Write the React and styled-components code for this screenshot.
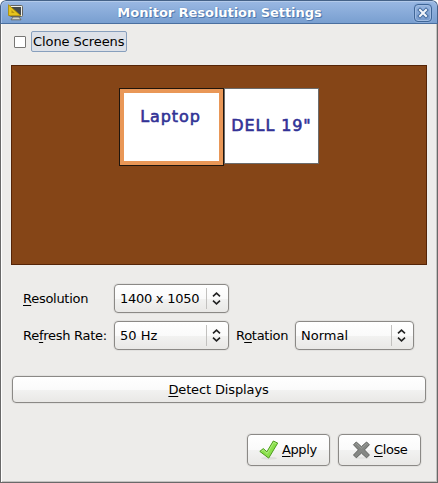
import React from "react";
import styled, { createGlobalStyle } from "styled-components";

const GlobalStyle = createGlobalStyle`
  * { box-sizing: border-box; }
  body { margin: 0; background: #fff; }
`;

const Window = styled.div`
  display: flex;
  flex-direction: column;
  width: 438px;
  height: 483px;
  overflow: hidden;
  border-radius: 6px 6px 0 0;
  background: #edecea;
  color: #000;
  font: 13px/16px "DejaVu Sans", sans-serif;
`;

const TitleBar = styled.header`
  display: flex;
  align-items: center;
  height: 24px;
  flex: none;
  padding: 1px 5px 0 6px;
  border: 1px solid #456288;
  border-bottom-color: #4a6f9f;
  border-radius: 6px 6px 0 0;
  background: linear-gradient(#9ab8e3, #799fd0);
  box-shadow: inset 0 1px #b3caea, inset 1px 0 #a3bee5;
`;

const Title = styled.h1`
  flex: 1;
  margin: 0;
  padding-left: 1px;
  color: #fff;
  font-size: 13px;
  line-height: 20px;
  text-align: center;
  white-space: nowrap;
  letter-spacing: -0.05px;
  text-shadow: 1px 1px #5078ad, 0 0 1px #4a70a5;
`;

const CloseBox = styled.button`
  display: flex;
  align-items: center;
  justify-content: center;
  width: 18px;
  height: 18px;
  padding: 0;
  border: 1px solid #3f6697;
  border-radius: 4px;
  background: linear-gradient(#96b5e0, #7599cb);
  box-shadow: 0 0 0 1px #8caddb, inset 0 0 0 1px #a1bce2;
`;

const Body = styled.main`
  flex: 1;
  display: flex;
  flex-direction: column;
  padding: 7px 10px 15px 10px;
  border: 1px solid #696969;
  border-top: 0;
  box-shadow: inset 1px 0 #fff, inset -1px -1px #c3c2c0;
`;

const CheckRow = styled.label`
  display: flex;
  align-items: center;
  gap: 5px;
  height: 21px;
  margin-left: 3px;
`;

const CheckBox = styled.span`
  width: 12px;
  height: 12px;
  border: 1px solid #777674;
  border-radius: 1px;
  background: #fff;
`;

const CheckText = styled.span`
  width: 96px;
  height: 21px;
  padding: 2px 0 0 1px;
  border: 1px solid #879fbd;
  border-radius: 2px;
  background: #dde1e8;
  white-space: nowrap;
  letter-spacing: -0.08px;
`;

const Canvas = styled.section`
  display: flex;
  align-items: flex-start;
  height: 200px;
  flex: none;
  margin: 13px 0 19px;
  padding: 22px 0 0 107px;
  border: 1px solid #552407;
  background: #854517;
`;

const Screen = styled.div`
  display: flex;
  justify-content: center;
  width: ${(p) => p.$width}px;
  height: ${(p) => p.$height}px;
  padding: ${(p) => p.$top}px ${(p) => p.$right || 0}px 0 0;
  border: 1px solid ${(p) => (p.$selected ? "#20150c" : "#6c6c6c")};
  background: #fff;
  box-shadow: ${(p) => (p.$selected ? "inset 0 0 0 4px #e99757" : "none")};
  color: #323296;
  font-size: 16px;
  line-height: 20px;
  letter-spacing: 0.9px;
  -webkit-text-stroke: 0.6px #323296;
  white-space: nowrap;
`;

const Field = styled.div`
  display: flex;
  align-items: center;
  height: 29px;
  margin-bottom: 8px;
  padding-left: 12px;
`;

const Label = styled.span`
  width: ${(p) => p.$width}px;
  margin-left: ${(p) => p.$gap || 0}px;
  white-space: nowrap;
  letter-spacing: -0.28px;
`;

const Key = styled.u`
  text-decoration-thickness: 1px;
  text-underline-offset: 2px;
  text-decoration-skip-ink: none;
`;

const Control = styled.button`
  display: flex;
  align-items: center;
  flex: none;
  padding: 0;
  border: 1px solid #8b8986;
  border-radius: 4px;
  background: linear-gradient(#fff, #fafafa 50%, #f2f2f1 51%, #e9e8e6);
  box-shadow: 0 0 0 1px #e2e1df;
  color: #000;
  font: inherit;
  white-space: nowrap;
`;

const Select = styled(Control)`
  width: ${(p) => p.$width}px;
  height: 29px;
  padding-left: 5px;
`;

const Value = styled.span`
  flex: 1;
  text-align: left;
  letter-spacing: ${(p) => p.$spacing || 0}px;
`;

const Stepper = styled.span`
  display: flex;
  align-items: center;
  justify-content: center;
  width: 22px;
  height: 21px;
  padding-right: 2px;
  border-left: 1px solid #c2c1bf;
`;

const WideButton = styled(Control)`
  justify-content: center;
  width: 414px;
  height: 27px;
  margin: 18px 0 0 1px;
  padding-right: 1px;
  letter-spacing: -0.13px;
`;

const Actions = styled.footer`
  display: flex;
  gap: 8px;
  margin: 31px 0 0 236px;
`;

const ActionButton = styled(Control)`
  width: 83px;
  height: 32px;
  padding-left: ${(p) => p.$left}px;
  gap: ${(p) => p.$gap}px;
  letter-spacing: -0.4px;
`;

const MonitorIcon = () => (
  <svg width="17" height="17" viewBox="0 0 17 17">
    <path d="M6 13h6l2 2.8H4z" fill="#d3d3ca" stroke="#5d5d55" strokeWidth=".8" />
    <rect x="2.5" y="1.5" width="13" height="11" rx="1" fill="#eeeee8" stroke="#64645e" />
    <rect x="4" y="3" width="10" height="8" fill="#454b4d" />
    <path d="M1.5.8 13.5 11.5h-12z" fill="#e6c31c" stroke="#a88900" strokeWidth=".8" />
    <path d="M4.5 6v3h3.2z" fill="#b79411" />
  </svg>
);

const CrossIcon = () => (
  <svg width="12" height="12" viewBox="0 0 12 12">
    <path d="m3 3 6 6m0-6L3 9" stroke="#456c9f" strokeWidth="4" strokeLinecap="square" />
    <path d="m3 3 6 6m0-6L3 9" stroke="#f4f7fc" strokeWidth="2" strokeLinecap="square" />
  </svg>
);

const Arrows = () => (
  <svg width="9" height="13" viewBox="0 0 9 13" fill="none" stroke="#222" strokeWidth="1.6">
    <path d="m1 4.3 3.5-3.2L8 4.3M1 8.7l3.5 3.2L8 8.7" />
  </svg>
);

const ApplyIcon = () => (
  <svg width="20" height="20" viewBox="0 0 20 20">
    <ellipse cx="10" cy="18.3" rx="8" ry="1.4" fill="#dededc" />
    <path
      d="M.8 11.4 4.3 8.6l3.6 3.2L14.3 1l4.4 2.1-9 15z"
      fill="#8ae04b" stroke="#4b9a1c" strokeLinejoin="round"
    />
    <path d="m2.4 11.4 1.8-1.5 4 3.5 6.5-11 2.6 1.2" fill="none" stroke="#baf08f" strokeWidth=".8" />
  </svg>
);

const CloseIcon = () => (
  <svg width="20" height="20" viewBox="0 0 20 20">
    <ellipse cx="10" cy="18" rx="8" ry="1.2" fill="#e2e2e0" />
    <path
      d="M1.5 4.8 4.3 2l5.1 4.7L14.6 2l2.8 2.8-4.9 5.1 4.9 5.1-2.8 2.8-5.2-4.7-5.1 4.7L1.5 15l4.9-5.1z"
      fill="#858784" stroke="#60625f" strokeLinejoin="round"
    />
    <path d="m2.9 4.8 1.4-1.4 5.1 4.8 5.2-4.8L16 4.8" fill="none" stroke="#a5a7a4" strokeWidth=".7" />
  </svg>
);

const Combo = ({ width, spacing, children }) => (
  <Select $width={width}>
    <Value $spacing={spacing}>{children}</Value>
    <Stepper><Arrows /></Stepper>
  </Select>
);

export default function App() {
  return (
    <>
      <GlobalStyle />
      <Window>
        <TitleBar>
          <MonitorIcon />
          <Title>Monitor Resolution Settings</Title>
          <CloseBox aria-label="Close window"><CrossIcon /></CloseBox>
        </TitleBar>
        <Body>
          <CheckRow>
            <CheckBox />
            <CheckText>Clone Screens</CheckText>
          </CheckRow>
          <Canvas>
            <Screen $selected $width={105} $height={78} $top={18} $right={2}>Laptop</Screen>
            <Screen $width={95} $height={76} $top={27}>DELL 19"</Screen>
          </Canvas>
          <Field>
            <Label $width={91}><Key>R</Key>esolution</Label>
            <Combo width={115} spacing={-0.27}>1400 x 1050</Combo>
          </Field>
          <Field>
            <Label $width={91}>Re<Key>f</Key>resh Rate:</Label>
            <Combo width={115}>50 Hz</Combo>
            <Label $width={59} $gap={7}>R<Key>o</Key>tation</Label>
            <Combo width={119}>Normal</Combo>
          </Field>
          <WideButton><span><Key>D</Key>etect Displays</span></WideButton>
          <Actions>
            <ActionButton $left={11} $gap={3}><ApplyIcon /><span><Key>A</Key>pply</span></ActionButton>
            <ActionButton $left={13} $gap={2}><CloseIcon /><span><Key>C</Key>lose</span></ActionButton>
          </Actions>
        </Body>
      </Window>
    </>
  );
}
